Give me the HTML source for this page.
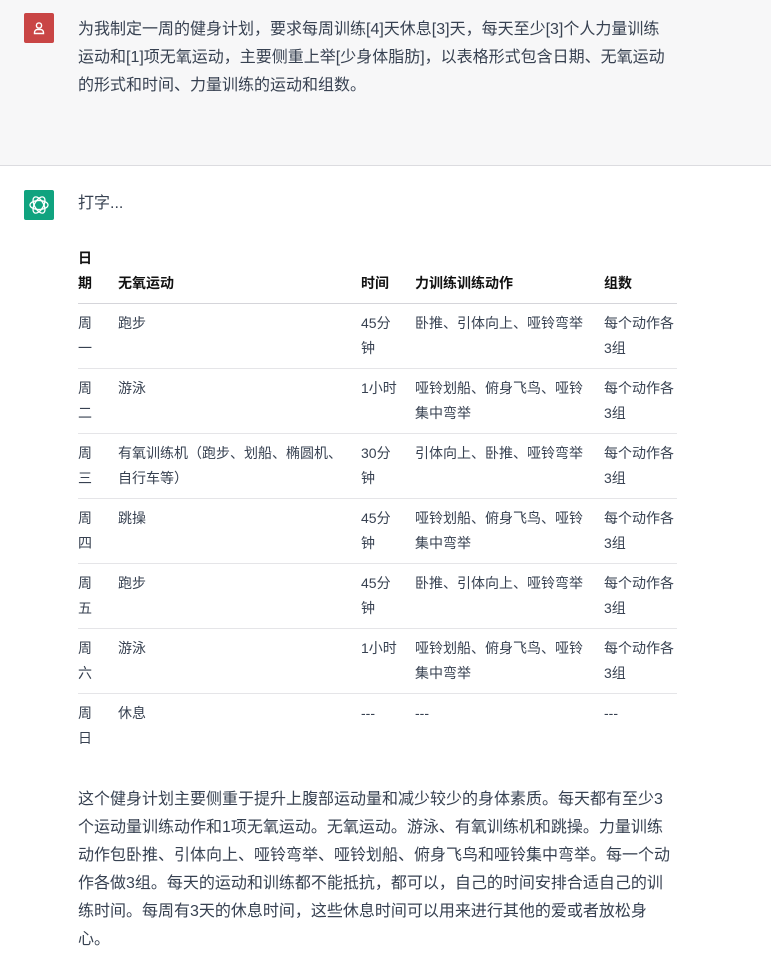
<!DOCTYPE html>
<html><head><meta charset="utf-8"><style>
*{margin:0;padding:0;box-sizing:border-box}
body{width:771px;height:958px;background:#fff;font-family:"Liberation Sans","Noto Sans CJK SC",sans-serif;color:#374151;position:relative;overflow:hidden}
.top{position:absolute;left:0;top:0;width:771px;height:166px;background:#f7f7f8;border-bottom:1px solid #dcdce0}
.av{position:absolute;width:30px;height:30px;border-radius:2px;display:flex;align-items:center;justify-content:center}
.p{position:absolute;left:78px;font-size:16px;line-height:28px;white-space:nowrap}
.t{position:absolute;font-size:14px;line-height:24.5px;white-space:nowrap}
.b{font-weight:bold;color:#111}
.hr{position:absolute;left:78px;width:599px;height:1px;background:#e5e5e8}
</style></head><body>
<div class="top"></div>
<div class="av" style="left:24px;top:13px;background:#c94545">
<svg width="16" height="16" viewBox="0 0 16 16" fill="none" stroke="#fff" stroke-width="1.4"><circle cx="8" cy="5.5" r="2.6"/><path d="M3.5 13.5v-1a3 3 0 0 1 3-3h3a3 3 0 0 1 3 3v1z"/></svg></div>
<div class="p" style="top:16px">为我制定一周的健身计划，要求每周训练[4]天休息[3]天，每天至少[3]个人力量训练<br>运动和[1]项无氧运动，主要侧重上举[少身体脂肪]，以表格形式包含日期、无氧运动<br>的形式和时间、力量训练的运动和组数。</div>
<div class="av" style="left:24px;top:190px;background:#10a37f">
<svg width="22" height="22" viewBox="0 0 22 22" fill="none" stroke="#fff" stroke-width="1.3"><ellipse cx="11" cy="11" rx="9" ry="4.5"/><ellipse cx="11" cy="11" rx="9" ry="4.5" transform="rotate(60 11 11)"/><ellipse cx="11" cy="11" rx="9" ry="4.5" transform="rotate(120 11 11)"/></svg></div>
<div class="p" style="top:190px">打字...</div>

<div class="t b" style="left:78px;top:246px">日<br>期</div>
<div class="t b" style="left:118px;top:271px">无氧运动</div>
<div class="t b" style="left:361px;top:271px">时间</div>
<div class="t b" style="left:415px;top:271px">力训练训练动作</div>
<div class="t b" style="left:604px;top:271px">组数</div>
<div class="hr" style="top:303px;background:#d5d5da"></div>

<div class="t" style="left:78px;top:311px">周<br>一</div><div class="t" style="left:118px;top:311px">跑步</div><div class="t" style="left:361px;top:311px">45分<br>钟</div><div class="t" style="left:415px;top:311px">卧推、引体向上、哑铃弯举</div><div class="t" style="left:604px;top:311px">每个动作各<br>3组</div>
<div class="hr" style="top:368px"></div>
<div class="t" style="left:78px;top:376px">周<br>二</div><div class="t" style="left:118px;top:376px">游泳</div><div class="t" style="left:361px;top:376px">1小时</div><div class="t" style="left:415px;top:376px">哑铃划船、俯身飞鸟、哑铃<br>集中弯举</div><div class="t" style="left:604px;top:376px">每个动作各<br>3组</div>
<div class="hr" style="top:433px"></div>
<div class="t" style="left:78px;top:441px">周<br>三</div><div class="t" style="left:118px;top:441px">有氧训练机（跑步、划船、椭圆机、<br>自行车等）</div><div class="t" style="left:361px;top:441px">30分<br>钟</div><div class="t" style="left:415px;top:441px">引体向上、卧推、哑铃弯举</div><div class="t" style="left:604px;top:441px">每个动作各<br>3组</div>
<div class="hr" style="top:498px"></div>
<div class="t" style="left:78px;top:506px">周<br>四</div><div class="t" style="left:118px;top:506px">跳操</div><div class="t" style="left:361px;top:506px">45分<br>钟</div><div class="t" style="left:415px;top:506px">哑铃划船、俯身飞鸟、哑铃<br>集中弯举</div><div class="t" style="left:604px;top:506px">每个动作各<br>3组</div>
<div class="hr" style="top:563px"></div>
<div class="t" style="left:78px;top:571px">周<br>五</div><div class="t" style="left:118px;top:571px">跑步</div><div class="t" style="left:361px;top:571px">45分<br>钟</div><div class="t" style="left:415px;top:571px">卧推、引体向上、哑铃弯举</div><div class="t" style="left:604px;top:571px">每个动作各<br>3组</div>
<div class="hr" style="top:628px"></div>
<div class="t" style="left:78px;top:636px">周<br>六</div><div class="t" style="left:118px;top:636px">游泳</div><div class="t" style="left:361px;top:636px">1小时</div><div class="t" style="left:415px;top:636px">哑铃划船、俯身飞鸟、哑铃<br>集中弯举</div><div class="t" style="left:604px;top:636px">每个动作各<br>3组</div>
<div class="hr" style="top:693px"></div>
<div class="t" style="left:78px;top:701px">周<br>日</div><div class="t" style="left:118px;top:701px">休息</div><div class="t" style="left:361px;top:701px">---</div><div class="t" style="left:415px;top:701px">---</div><div class="t" style="left:604px;top:701px">---</div>

<div class="p" style="top:786px">这个健身计划主要侧重于提升上腹部运动量和减少较少的身体素质。每天都有至少3<br>个运动量训练动作和1项无氧运动。无氧运动。游泳、有氧训练机和跳操。力量训练<br>动作包卧推、引体向上、哑铃弯举、哑铃划船、俯身飞鸟和哑铃集中弯举。每一个动<br>作各做3组。每天的运动和训练都不能抵抗，都可以，自己的时间安排合适自己的训<br>练时间。每周有3天的休息时间，这些休息时间可以用来进行其他的爱或者放松身<br>心。</div>
</body></html>
